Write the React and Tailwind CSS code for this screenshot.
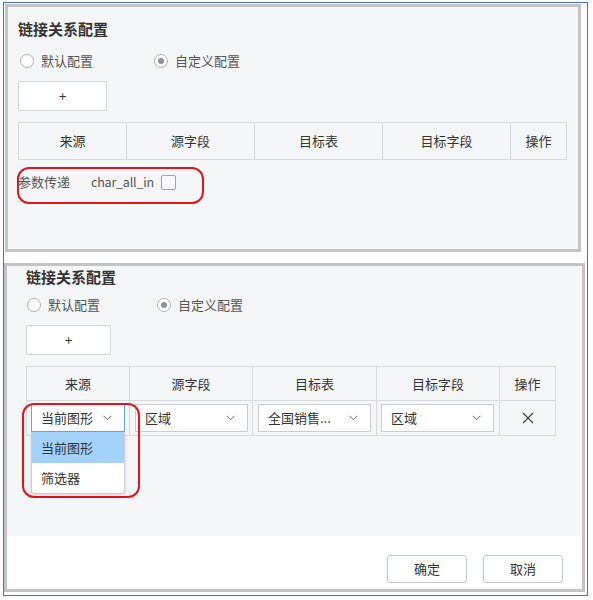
import React from "react";

const FONT = "font-['Noto_Sans_CJK_SC','Noto_Sans',sans-serif]";

function Radio({ checked, label }) {
  return (
    <div className="flex items-center h-[20px]">
      <span className="flex items-center justify-center w-[14px] h-[14px] rounded-full border border-[#aeb3bb] bg-white">
        {checked && <span className="w-[6px] h-[6px] rounded-full bg-[#8c919b]" />}
      </span>
      <span className="ml-[7px] text-[13px] leading-[20px] text-[#555]">{label}</span>
    </div>
  );
}

function Chevron() {
  return (
    <svg width="9" height="6" viewBox="0 0 9 6" className="shrink-0">
      <polyline points="0.5,0.8 4.5,4.8 8.5,0.8" fill="none" stroke="#666" strokeWidth="1" />
    </svg>
  );
}

function Select({ value, focused, children }) {
  return (
    <div className="relative w-full">
      <div
        className={
          "flex items-center justify-between h-[28px] bg-white pl-[9px] pr-[12px] border " +
          (focused ? "border-[#6aa3e3]" : "border-[#c9cdd4]")
        }
      >
        <span className="text-[13px] leading-[20px] text-[#333] whitespace-nowrap">{value}</span>
        <Chevron />
      </div>
      {children}
    </div>
  );
}

export default function App() {
  const hdr1 = ["来源", "源字段", "目标表", "目标字段", "操作"];
  return (
    <div className={"relative w-[593px] h-[600px] bg-white overflow-hidden " + FONT}>
      <div className="ml-[3px] mt-[2px] w-[585px] h-[594px] border border-[#4472c4] flex flex-col">
        {/* Panel 1 */}
        <div className="ml-[1px] mt-[1px] w-[576px] h-[248px] shrink-0 border-[3px] border-[#c4c4c4] bg-[#f5f6f8] pl-[10px] pt-[12px] flex flex-col">
          <div className="text-[15px] leading-[20px] font-semibold text-[#333]">链接关系配置</div>
          <div className="flex items-center mt-[12px] pl-[2px]">
            <div className="w-[134px]">
              <Radio label="默认配置" />
            </div>
            <Radio checked label="自定义配置" />
          </div>
          <div className="mt-[10px] w-[89px] h-[30px] bg-white border border-[#d4d7dd] flex items-center justify-center text-[13px] text-[#333]">
            +
          </div>
          <div className="mt-[11px] grid grid-cols-[108px_128px_128px_128px_56px] w-[549px] border-l border-t border-[#d6d9de]">
            {hdr1.map((h) => (
              <div
                key={h}
                className="h-[37px] border-r border-b border-[#d6d9de] flex items-center justify-center text-[13px] text-[#333]"
              >
                {h}
              </div>
            ))}
          </div>
          <div className="mt-[12px] flex items-center h-[20px]">
            <span className="text-[13px] leading-[20px] text-[#555]">参数传递</span>
            <span className="ml-[21px] text-[12.5px] tracking-[-0.2px] leading-[20px] text-[#555]">char_all_in</span>
            <span className="ml-[7px] w-[15px] h-[15px] border border-[#9ea3ab] rounded-[2px] bg-[#f8f9fa]" />
          </div>
        </div>

        {/* Panel 2 */}
        <div className="mt-[11px] w-[581px] h-[329px] shrink-0 border-[3px] border-[#c4c4c4] flex flex-col">
          <div className="flex-1 bg-[#f5f6f8] pl-[19px] pt-[1px] flex flex-col">
            <div className="text-[15px] leading-[20px] font-semibold text-[#333]">链接关系配置</div>
            <div className="flex items-center mt-[8px] pl-[1px]">
              <div className="w-[130px]">
                <Radio label="默认配置" />
              </div>
              <Radio checked label="自定义配置" />
            </div>
            <div className="mt-[10px] w-[85px] h-[30px] bg-white border border-[#d4d7dd] flex items-center justify-center text-[13px] text-[#333]">
              +
            </div>
            <div className="mt-[11px] grid grid-cols-[103px_123px_124px_123px_56px] w-[530px] border-l border-t border-[#d6d9de]">
              {hdr1.map((h) => (
                <div
                  key={h}
                  className="h-[34px] border-r border-b border-[#d6d9de] flex items-center justify-center text-[13px] text-[#333]"
                >
                  {h}
                </div>
              ))}
              <div className="h-[35px] border-r border-b border-[#d6d9de] flex items-center px-[4px]">
                <Select value="当前图形" focused>
                  <div className="absolute left-0 top-full w-full bg-white border border-t-0 border-[#c9cdd4] rounded-b-[3px] shadow-[0_2px_4px_rgba(0,0,0,0.12)] z-10">
                    <div className="h-[31px] bg-[#a3d3fb] flex items-center pl-[9px] text-[13px] text-[#333]">当前图形</div>
                    <div className="h-[30px] flex items-center pl-[9px] text-[13px] text-[#333]">筛选器</div>
                  </div>
                </Select>
              </div>
              <div className="h-[35px] border-r border-b border-[#d6d9de] flex items-center pl-[5px] pr-[4px]">
                <Select value="区域" />
              </div>
              <div className="h-[35px] border-r border-b border-[#d6d9de] flex items-center pl-[5px] pr-[5px]">
                <Select value="全国销售..." />
              </div>
              <div className="h-[35px] border-r border-b border-[#d6d9de] flex items-center pl-[4px] pr-[5px]">
                <Select value="区域" />
              </div>
              <div className="h-[35px] border-r border-b border-[#d6d9de] flex items-center justify-center">
                <svg width="12" height="12" viewBox="0 0 12 12">
                  <path d="M1 1 L11 11 M11 1 L1 11" stroke="#444" strokeWidth="1.3" fill="none" />
                </svg>
              </div>
            </div>
          </div>
          <div className="h-[53px] shrink-0 bg-white flex justify-end items-start pt-[19px] pr-[19px] gap-[16px]">
            <div className="w-[80px] h-[28px] border border-[#c6cad1] rounded-[3px] bg-white flex items-center justify-center text-[13px] text-[#333]">
              确定
            </div>
            <div className="w-[80px] h-[28px] border border-[#c6cad1] rounded-[3px] bg-white flex items-center justify-center text-[13px] text-[#333]">
              取消
            </div>
          </div>
        </div>
      </div>

      {/* red annotation boxes */}
      <div className="absolute left-[17px] top-[167px] w-[187px] h-[37px] border-2 border-[#e5141b] rounded-[12px]" />
      <div className="absolute left-[22px] top-[403px] w-[118px] h-[95px] border-2 border-[#e5141b] rounded-[12px]" />
    </div>
  );
}
